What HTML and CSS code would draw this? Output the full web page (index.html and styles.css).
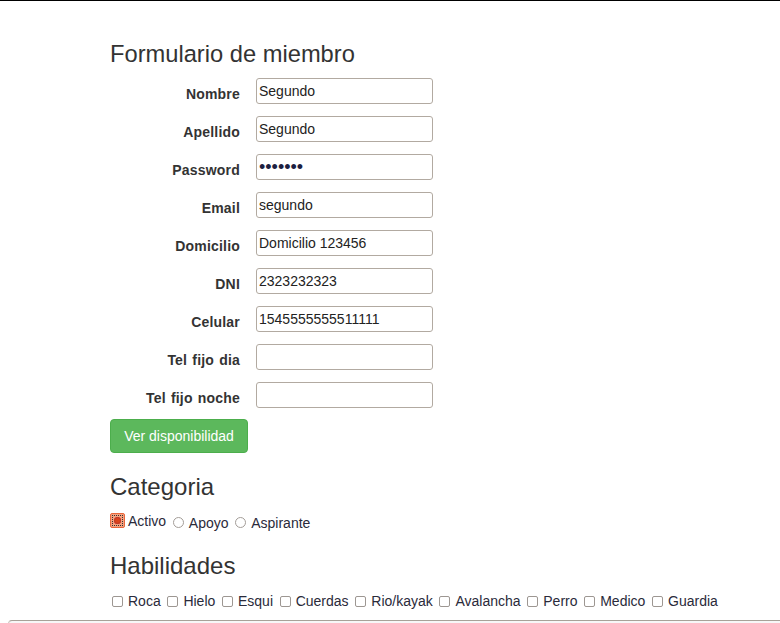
FILE: index.html
```html
<!DOCTYPE html>
<html>
<head>
<meta charset="utf-8">
<link rel="stylesheet" href="styles.css">
</head>
<body>
<div class="topline"></div>
<div class="container">
  <h3 class="title">Formulario de miembro</h3>
  <form class="form">
    <div class="row"><label class="lbl">Nombre</label><div class="input">Segundo</div></div>
    <div class="row"><label class="lbl">Apellido</label><div class="input">Segundo</div></div>
    <div class="row"><label class="lbl">Password</label><div class="input pw">•••••••</div></div>
    <div class="row"><label class="lbl">Email</label><div class="input">segundo</div></div>
    <div class="row"><label class="lbl">Domicilio</label><div class="input">Domicilio 123456</div></div>
    <div class="row"><label class="lbl">DNI</label><div class="input">2323232323</div></div>
    <div class="row"><label class="lbl">Celular</label><div class="input">1545555555511111</div></div>
    <div class="row"><label class="lbl">Tel fijo dia</label><div class="input"></div></div>
    <div class="row"><label class="lbl">Tel fijo noche</label><div class="input"></div></div>
    <button type="button" class="btn">Ver disponibilidad</button>
  </form>
  <h3 class="section cat">Categoria</h3>
  <div class="choices radios">
    <label class="opt"><span class="radio checked"><span class="dot"></span></span>Activo</label>
    <label class="opt"><span class="radio"></span>Apoyo</label>
    <label class="opt"><span class="radio"></span>Aspirante</label>
  </div>
  <h3 class="section hab">Habilidades</h3>
  <div class="choices checks">
    <label class="opt"><span class="check"></span>Roca</label>
    <label class="opt"><span class="check"></span>Hielo</label>
    <label class="opt"><span class="check"></span>Esqui</label>
    <label class="opt"><span class="check"></span>Cuerdas</label>
    <label class="opt"><span class="check"></span>Rio/kayak</label>
    <label class="opt"><span class="check"></span>Avalancha</label>
    <label class="opt"><span class="check"></span>Perro</label>
    <label class="opt"><span class="check"></span>Medico</label>
    <label class="opt"><span class="check"></span>Guardia</label>
  </div>
</div>
<div class="bottombox"></div>
</body>
</html>
```
FILE: styles.css
```css
html, body {
  margin: 0;
  padding: 0;
  background: #fff;
}
body {
  font-family: "Liberation Sans", Arial, sans-serif;
  font-size: 14px;
  line-height: 20px;
  color: #333;
  overflow: hidden;
  height: 623px;
}
.topline {
  height: 1px;
  background: #000;
}
.container {
  padding-left: 110px;
  padding-top: 20px;
}
h3 {
  font-size: 24px;
  font-weight: 500;
  line-height: 26.4px;
  margin: 20px 0 10px;
  color: #333;
}
.title {
  font-size: 23.7px;
  margin-top: 20px;
  margin-bottom: 11px;
}
.form {
  display: flex;
  flex-direction: column;
}
.row {
  display: flex;
  align-items: flex-start;
  height: 38px;
}
.lbl {
  width: 130px;
  text-align: right;
  font-weight: bold;
  font-size: 14px;
  letter-spacing: 0.2px;
  word-spacing: 1px;
  padding-top: 6px;
  line-height: 20px;
}
.input {
  margin-left: 16px;
  border: 1px solid #b2aaa1;
  border-radius: 3px;
  padding: 0 2px;
  box-sizing: border-box;
  width: 177px;
  height: 26px;
  line-height: 24px;
  color: #222;
  font-size: 14px;
  overflow: hidden;
  white-space: nowrap;
}
.pw {
  font-size: 18px;
  letter-spacing: 0;
  color: #1c2040;
}
.btn {
  align-self: flex-start;
  margin-top: -1px;
  width: 138px;
  height: 34px;
  background: #5cb85c;
  border: 1px solid #4cae4c;
  border-radius: 4px;
  color: #fff;
  font-family: "Liberation Sans", Arial, sans-serif;
  font-size: 14px;
  padding: 0;
}
.section {
  margin-bottom: 10px;
}
.cat {
  margin-top: 21px;
}
.hab {
  margin-top: 22px;
}
.choices {
  line-height: 20px;
  height: 20px;
  white-space: nowrap;
  color: #2a2a3a;
}
.radios {
  padding-top: 0;
}
.checks {
  padding-top: 2px;
}
.opt {
  display: inline-flex;
  align-items: center;
  margin-right: 0.8px;
}
.check {
  display: inline-block;
  width: 11px;
  height: 11px;
  box-sizing: border-box;
  border: 1px solid #9d9792;
  border-radius: 2px;
  background: #fff;
  margin: 0 5px 0 2px;
}
.radio {
  display: inline-block;
  width: 11px;
  height: 11px;
  box-sizing: border-box;
  border: 1px solid #a39d98;
  border-radius: 50%;
  background: #fff;
  margin: 0 5px 0 2px;
}
.radio.checked {
  position: relative;
  width: 15px;
  height: 15px;
  margin: 0 3px 0 0;
  border-radius: 2px;
  border: 1px solid #e8673c;
  background: #f4a07e;
}
.radio.checked::before {
  content: "";
  position: absolute;
  left: 1px;
  top: 1px;
  right: 1px;
  bottom: 1px;
  border: 1px dotted #333;
}
.radio.checked .dot {
  position: absolute;
  left: 3px;
  top: 3px;
  width: 7px;
  height: 7px;
  border-radius: 50%;
  background: #d9431c;
  box-shadow: 0 0 0 1px #c0392b inset;
}
.bottombox {
  position: absolute;
  left: 8px;
  right: -10px;
  top: 620px;
  height: 20px;
  border-top: 1px solid #a8a198;
  border-left: 1px solid #c8c2bb;
  border-radius: 4px 0 0 0;
  background: #f7f7f7;
}
```
